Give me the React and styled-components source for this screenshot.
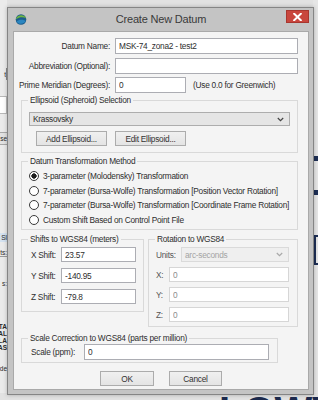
import React from "react";
import styled, { createGlobalStyle } from "styled-components";

const UI_FONT = `"Liberation Sans", Arial, sans-serif`;

const GlobalStyle = createGlobalStyle`
  html, body { margin: 0; padding: 0; background: #e2e2e2; }
  body { width: 318px; height: 400px; overflow: hidden; }
`;

const App = () => {
    return (
        <Desktop>
            <GlobalStyle />
            <LeftStrip>
                <Frag $top={68} $h={12} $edge>t</Frag>
                <BoxFrag $top={16} $h={16} />
                <Frag $top={19} $h={11} $button>se</Frag>
                <Frag $top={89} $h={9} $select>Sl</Frag>
                <Frag $top={6} $h={8} $underline>ts:</Frag>
                <Frag $top={22} $h={8}>s:</Frag>
                <Frag $top={36} $h={7} $bold>TA</Frag>
                <Frag $top={0} $h={7} $bold>AL</Frag>
                <Frag $top={0} $h={7} $bold>LA</Frag>
                <Frag $top={0} $h={7} $bold>AS</Frag>
                <Frag $top={13} $h={8}>de</Frag>
            </LeftStrip>
            <RightStrip>
                <Mark $top={156} $h={5} />
                <Mark $top={29} $h={5} />
                <Bracket />
            </RightStrip>
            <BottomBand>
                <BigText>LOWW</BigText>
            </BottomBand>

            <Dialog>
                <TitleBar>
                    <AppIcon width="12" height="12" viewBox="0 0 12 12">
                        <circle cx="6" cy="6.5" r="5.3" fill="#1d5d8c" />
                        <path d="M0.8 6.2 C1.8 1.8, 8.8 0.6, 11.3 5.2 C8.2 3.6, 4.2 3.8, 0.8 6.2Z" fill="#6fb640" />
                        <path d="M1.5 8.4 C4 6.2, 8 6.4, 10.8 8 C8.6 11.4, 3.6 11.6, 1.5 8.4Z" fill="#2b86c0" />
                    </AppIcon>
                    <Title>Create New Datum</Title>
                    <CloseButton>
                        <svg width="9" height="8" viewBox="0 0 9 8">
                            <path d="M1.2 0.8 L7.8 7.2 M7.8 0.8 L1.2 7.2" stroke="#fff" strokeWidth="2" strokeLinecap="square" />
                        </svg>
                    </CloseButton>
                </TitleBar>

                <Client>
                    <FieldRow $mt={0}>
                        <Label>Datum Name:</Label>
                        <TextBox $w={183} readOnly value="MSK-74_zona2 - test2" />
                    </FieldRow>
                    <FieldRow $mt={4}>
                        <Label>Abbreviation (Optional):</Label>
                        <TextBox $w={183} readOnly value="" />
                    </FieldRow>
                    <FieldRow $mt={3}>
                        <Label>Prime Meridian (Degrees):</Label>
                        <TextBox $w={71} readOnly value="0" />
                        <Note>(Use 0.0 for Greenwich)</Note>
                    </FieldRow>

                    <Group $w={277} $ml={8} $mt={2} $pt={6} $pb={6}>
                        <Legend>Ellipsoid (Spheroid) Selection</Legend>
                        <Combo $h={14}>
                            <span>Krassovsky</span>
                            <Chevron />
                        </Combo>
                        <ButtonRow>
                            <Button $w={71}>Add Ellipsoid...</Button>
                            <Button $w={71}>Edit Ellipsoid...</Button>
                        </ButtonRow>
                    </Group>

                    <Group $w={277} $ml={8} $mt={3} $pt={2} $pb={2}>
                        <Legend>Datum Transformation Method</Legend>
                        <Radio checked label="3-parameter (Molodensky) Transformation" />
                        <Radio label="7-parameter (Bursa-Wolfe) Transformation [Position Vector Rotation]" />
                        <Radio label="7-parameter (Bursa-Wolfe) Transformation [Coordinate Frame Rotation]" />
                        <Radio label="Custom Shift Based on Control Point File" />
                    </Group>

                    <GroupPair>
                        <Group $w={123} $ml={8} $pt={2} $pb={7}>
                            <Legend>Shifts to WGS84 (meters)</Legend>
                            <FormRow $gap={6}>
                                <ShiftLabel>X Shift:</ShiftLabel>
                                <TextBox $w={75} $h={15} readOnly value="23.57" />
                            </FormRow>
                            <FormRow $gap={6}>
                                <ShiftLabel>Y Shift:</ShiftLabel>
                                <TextBox $w={75} $h={15} readOnly value="-140.95" />
                            </FormRow>
                            <FormRow $gap={6}>
                                <ShiftLabel>Z Shift:</ShiftLabel>
                                <TextBox $w={75} $h={15} readOnly value="-79.8" />
                            </FormRow>
                        </Group>
                        <Group $w={150} $ml={0} $pt={2} $pb={4}>
                            <Legend>Rotation to WGS84</Legend>
                            <FormRow $gap={5}>
                                <RotLabel $w={25}>Units:</RotLabel>
                                <Combo $disabled $w={108} $h={15}>
                                    <span>arc-seconds</span>
                                    <Chevron $disabled />
                                </Combo>
                            </FormRow>
                            <FormRow $gap={5}>
                                <RotLabel $w={13}>X:</RotLabel>
                                <TextBox $w={120} $h={15} $disabled readOnly value="0" />
                            </FormRow>
                            <FormRow $gap={5}>
                                <RotLabel $w={13}>Y:</RotLabel>
                                <TextBox $w={120} $h={15} $disabled readOnly value="0" />
                            </FormRow>
                            <FormRow $gap={5}>
                                <RotLabel $w={13}>Z:</RotLabel>
                                <TextBox $w={120} $h={15} $disabled readOnly value="0" />
                            </FormRow>
                        </Group>
                    </GroupPair>

                    <Group $w={257} $ml={8} $mt={6} $pt={0} $pb={2}>
                        <Legend>Scale Correction to WGS84 (parts per million)</Legend>
                        <FormRow $gap={0}>
                            <ShiftLabel $w={55}>Scale (ppm):</ShiftLabel>
                            <TextBox $w={185} $h={16} readOnly value="0" />
                        </FormRow>
                    </Group>

                    <Footer>
                        <Button $w={54} $h={15}>OK</Button>
                        <Button $w={53} $h={15}>Cancel</Button>
                    </Footer>
                </Client>
            </Dialog>
        </Desktop>
    );
};

const Radio = ({ checked, label }) => (
    <RadioRow>
        <RadioCircle $checked={checked} />
        <span>{label}</span>
    </RadioRow>
);

const Chevron = ({ $disabled }) => (
    <svg width="7" height="5" viewBox="0 0 7 5">
        <path d="M0.8 1 L3.5 3.7 L6.2 1" fill="none" stroke={$disabled ? "#a8a8a8" : "#444"} strokeWidth="1.2" />
    </svg>
);

/* background application behind the dialog */

const Desktop = styled.div`
    position: relative;
    width: 318px;
    height: 400px;
    overflow: hidden;
    background: #e2e2e2;
    display: grid;
    grid-template-columns: 7px 1fr 5px;
    grid-template-rows: 393px 7px;
    font-family: ${UI_FONT};
`;

const LeftStrip = styled.div`
    grid-column: 1;
    grid-row: 1 / span 2;
    display: flex;
    flex-direction: column;
    background: #ebebeb;
    overflow: hidden;
`;

const Frag = styled.div`
    margin-top: ${p => p.$top}px;
    height: ${p => p.$h}px;
    flex: none;
    display: flex;
    align-items: center;
    justify-content: flex-end;
    font-size: 6.5px;
    line-height: 7px;
    font-weight: ${p => (p.$bold ? 700 : 400)};
    color: #2a2a2a;
    white-space: nowrap;
    overflow: hidden;
    border-right: ${p => (p.$edge ? "1px solid #8a8a8a" : "none")};
    border-bottom: ${p => (p.$underline ? "1px solid #9a9a9a" : "none")};
    background: ${p => (p.$button ? "#e2e2e2" : p.$select ? "#d4e2f0" : "transparent")};
    outline: ${p => (p.$button ? "1px solid #a8a8a8" : "none")};
`;

const BoxFrag = styled.div`
    margin-top: ${p => p.$top}px;
    height: ${p => p.$h}px;
    flex: none;
    background: #fff;
    border: 1px solid #b8b8b8;
    border-left: none;
`;

const RightStrip = styled.div`
    grid-column: 3;
    grid-row: 1;
    display: flex;
    flex-direction: column;
    background: #e6e6e6;
`;

const Mark = styled.div`
    margin-top: ${p => p.$top}px;
    height: ${p => p.$h}px;
    background: #1e2f55;
    flex: none;
`;

const Bracket = styled.div`
    margin-top: 40px;
    height: 26px;
    width: 3px;
    margin-left: 1px;
    border: 2px solid #1e2f55;
    border-right: none;
    flex: none;
`;

const BottomBand = styled.div`
    grid-column: 1 / span 3;
    grid-row: 2;
    overflow: hidden;
    padding-left: 219px;
    background: #e2e2e2;
`;

const BigText = styled.div`
    margin-top: -2px;
    font-family: "Liberation Sans", Arial, sans-serif;
    font-size: 40px;
    font-weight: 700;
    line-height: 1;
    color: #1c2a4e;
    white-space: nowrap;
`;

/* dialog */

const Dialog = styled.div`
    position: absolute;
    left: 7px;
    top: 7px;
    width: 307px;
    height: 388px;
    box-sizing: border-box;
    border: 1px solid #858585;
    background: #c4c4c4;
    box-shadow: 0 0 4px rgba(0, 0, 0, 0.25);
    padding: 0 4px 4px 5px;
    display: flex;
    flex-direction: column;
    font-family: ${UI_FONT};
    font-size: 8.3px;
    letter-spacing: -0.25px;
    color: #2e2e2e;
`;

const TitleBar = styled.div`
    height: 23px;
    flex: none;
    display: grid;
    grid-template-columns: 1fr auto 1fr;
    align-items: start;
`;

const AppIcon = styled.svg`
    margin: 5px 0 0 2px;
    display: block;
`;

const Title = styled.div`
    margin-top: 4px;
    font-size: 11px;
    letter-spacing: -0.2px;
    line-height: 15px;
    color: #3a3a3a;
`;

const CloseButton = styled.div`
    justify-self: end;
    margin-top: 2px;
    width: 23px;
    height: 13px;
    box-sizing: border-box;
    background: #c9463d;
    border: 1px solid #a8362f;
    display: flex;
    align-items: center;
    justify-content: center;
`;

const Client = styled.div`
    flex: 1;
    background: #f4f4f4;
    box-shadow: inset 0 0 0 1px #a9a9a9;
    padding-top: 7px;
    display: flex;
    flex-direction: column;
`;

const FieldRow = styled.div`
    display: flex;
    align-items: center;
    height: 16px;
    flex: none;
    margin-top: ${p => p.$mt}px;
`;

const Label = styled.div`
    width: 102px;
    box-sizing: border-box;
    padding-right: 5px;
    text-align: right;
    white-space: nowrap;
`;

const TextBox = styled.input`
    box-sizing: border-box;
    width: ${p => p.$w}px;
    height: ${p => p.$h || 16}px;
    margin: 0;
    padding: 0 3px;
    background: #fff;
    border: 1px solid ${p => (p.$disabled ? "#d6d6d6" : "#acadb3")};
    border-radius: 0;
    outline: none;
    font-family: ${UI_FONT};
    font-size: 8.3px;
    letter-spacing: -0.25px;
    color: ${p => (p.$disabled ? "#8c8c8c" : "#2e2e2e")};
`;

const Note = styled.span`
    margin-left: 7px;
    white-space: nowrap;
`;

const Group = styled.fieldset`
    box-sizing: border-box;
    flex: none;
    width: ${p => p.$w}px;
    margin: ${p => p.$mt || 0}px 0 0 ${p => p.$ml}px;
    padding: ${p => p.$pt}px 7px ${p => p.$pb}px 7px;
    border: 1px solid #d9d9d9;
    border-radius: 0;
    min-width: 0;
`;

const Legend = styled.legend`
    padding: 0 2px;
    margin-left: -1px;
    line-height: 11px;
    white-space: nowrap;
`;

const Combo = styled.div`
    box-sizing: border-box;
    width: ${p => (p.$w ? `${p.$w}px` : "auto")};
    height: ${p => p.$h}px;
    display: flex;
    align-items: center;
    justify-content: space-between;
    padding: 0 5px 0 3px;
    background: ${p => (p.$disabled ? "#efefef" : "#e5e5e5")};
    border: 1px solid ${p => (p.$disabled ? "#dadada" : "#adadad")};
    color: ${p => (p.$disabled ? "#a4a4a4" : "#2e2e2e")};
    white-space: nowrap;
`;

const ButtonRow = styled.div`
    display: flex;
    gap: 8px;
    margin: 5px 0 0 7px;
`;

const Button = styled.div`
    box-sizing: border-box;
    width: ${p => p.$w}px;
    height: ${p => p.$h || 15}px;
    display: flex;
    align-items: center;
    justify-content: center;
    background: linear-gradient(#f0f0f0, #e4e4e4);
    border: 1px solid #acacac;
    color: #333;
    white-space: nowrap;
`;

const RadioRow = styled.div`
    height: 14.5px;
    display: flex;
    align-items: center;
    gap: 4px;
    white-space: nowrap;
`;

const RadioCircle = styled.span`
    flex: none;
    width: 10px;
    height: 10px;
    box-sizing: border-box;
    border-radius: 50%;
    border: 1px solid #3a3a3a;
    background: ${p =>
        p.$checked
            ? "radial-gradient(circle, #1e1e1e 0 2.4px, #fff 2.9px)"
            : "#fff"};
`;

const GroupPair = styled.div`
    display: flex;
    align-items: flex-start;
    gap: 4px;
    margin-top: 4px;
`;

const FormRow = styled.div`
    display: flex;
    align-items: center;
    margin-top: ${p => p.$gap}px;
    &:first-of-type {
        margin-top: 0;
    }
`;

const ShiftLabel = styled.div`
    width: ${p => p.$w || 34}px;
    padding-left: 2px;
    box-sizing: border-box;
    white-space: nowrap;
`;

const RotLabel = styled.div`
    width: ${p => p.$w}px;
    color: #555;
    white-space: nowrap;
`;

const Footer = styled.div`
    display: flex;
    justify-content: center;
    gap: 15px;
    margin-top: 8px;
`;

export default App;
